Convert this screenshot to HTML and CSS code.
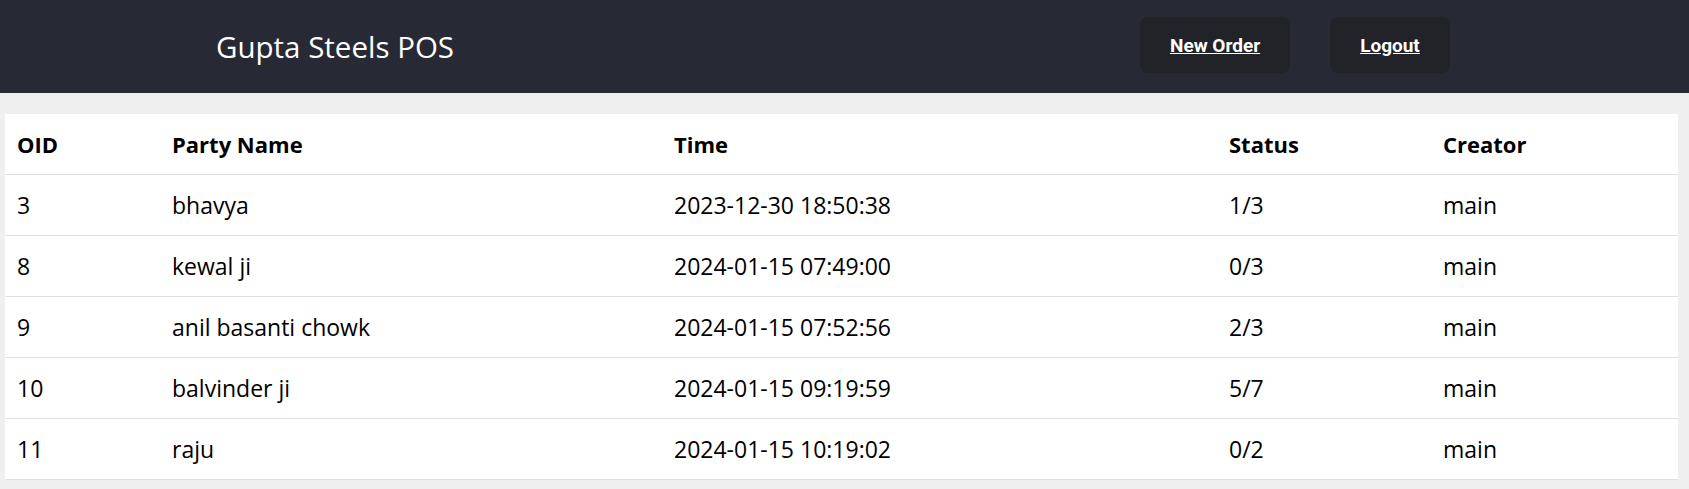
FILE: index.html
```html
<!DOCTYPE html>
<html>
<head>
<meta charset="utf-8">
<link rel="stylesheet" href="styles.css">
</head>
<body>
<header class="topbar">
  <div class="brand">Gupta Steels POS</div>
  <nav class="actions">
    <a class="btn" href="#">New Order</a>
    <a class="btn" href="#">Logout</a>
  </nav>
</header>
<main class="content">
  <table class="orders">
    <thead>
      <tr><th class="c-oid">OID</th><th class="c-party">Party Name</th><th class="c-time">Time</th><th class="c-status">Status</th><th>Creator</th></tr>
    </thead>
    <tbody>
      <tr><td>3</td><td>bhavya</td><td>2023-12-30 18:50:38</td><td>1/3</td><td>main</td></tr>
      <tr><td>8</td><td>kewal ji</td><td>2024-01-15 07:49:00</td><td>0/3</td><td>main</td></tr>
      <tr><td>9</td><td>anil basanti chowk</td><td>2024-01-15 07:52:56</td><td>2/3</td><td>main</td></tr>
      <tr><td>10</td><td>balvinder ji</td><td>2024-01-15 09:19:59</td><td>5/7</td><td>main</td></tr>
      <tr><td>11</td><td>raju</td><td>2024-01-15 10:19:02</td><td>0/2</td><td>main</td></tr>
    </tbody>
  </table>
</main>
</body>
</html>
```

FILE: styles.css
```css
html, body {
  margin: 0;
  padding: 0;
}
body {
  background: #efefef;
  font-family: "Open Sans", "Noto Sans", sans-serif;
  color: #000;
}
.topbar {
  height: 93px;
  background: #272a35;
  display: flex;
  align-items: center;
  box-sizing: border-box;
  padding-left: 216px;
}
.brand {
  color: #fff;
  font-size: 29.5px;
  width: 924px;
}
.actions {
  display: flex;
  gap: 40px;
  padding-bottom: 3px;
}
.btn {
  display: flex;
  align-items: center;
  justify-content: center;
  height: 56px;
  padding: 0 30px;
  background: #212328;
  border-radius: 8px;
  color: #fff;
  font-family: Roboto, "Liberation Sans", sans-serif;
  font-weight: 700;
  font-size: 19px;
  text-decoration: underline;
}
.content {
  padding: 21px 11px 10px 5px;
}
.orders {
  width: 100%;
  border-collapse: collapse;
  background: #fff;
  font-size: 23px;
}
.orders th, .orders td {
  text-align: left;
  padding: 0 0 0 12px;
  height: 60px;
  border-bottom: 1px solid #dfdfe5;
}
.orders th {
  font-weight: 700;
  font-size: 22px;
}
.c-oid { width: 143px; }
.c-party { width: 490px; }
.c-time { width: 543px; }
.c-status { width: 202px; }
```
